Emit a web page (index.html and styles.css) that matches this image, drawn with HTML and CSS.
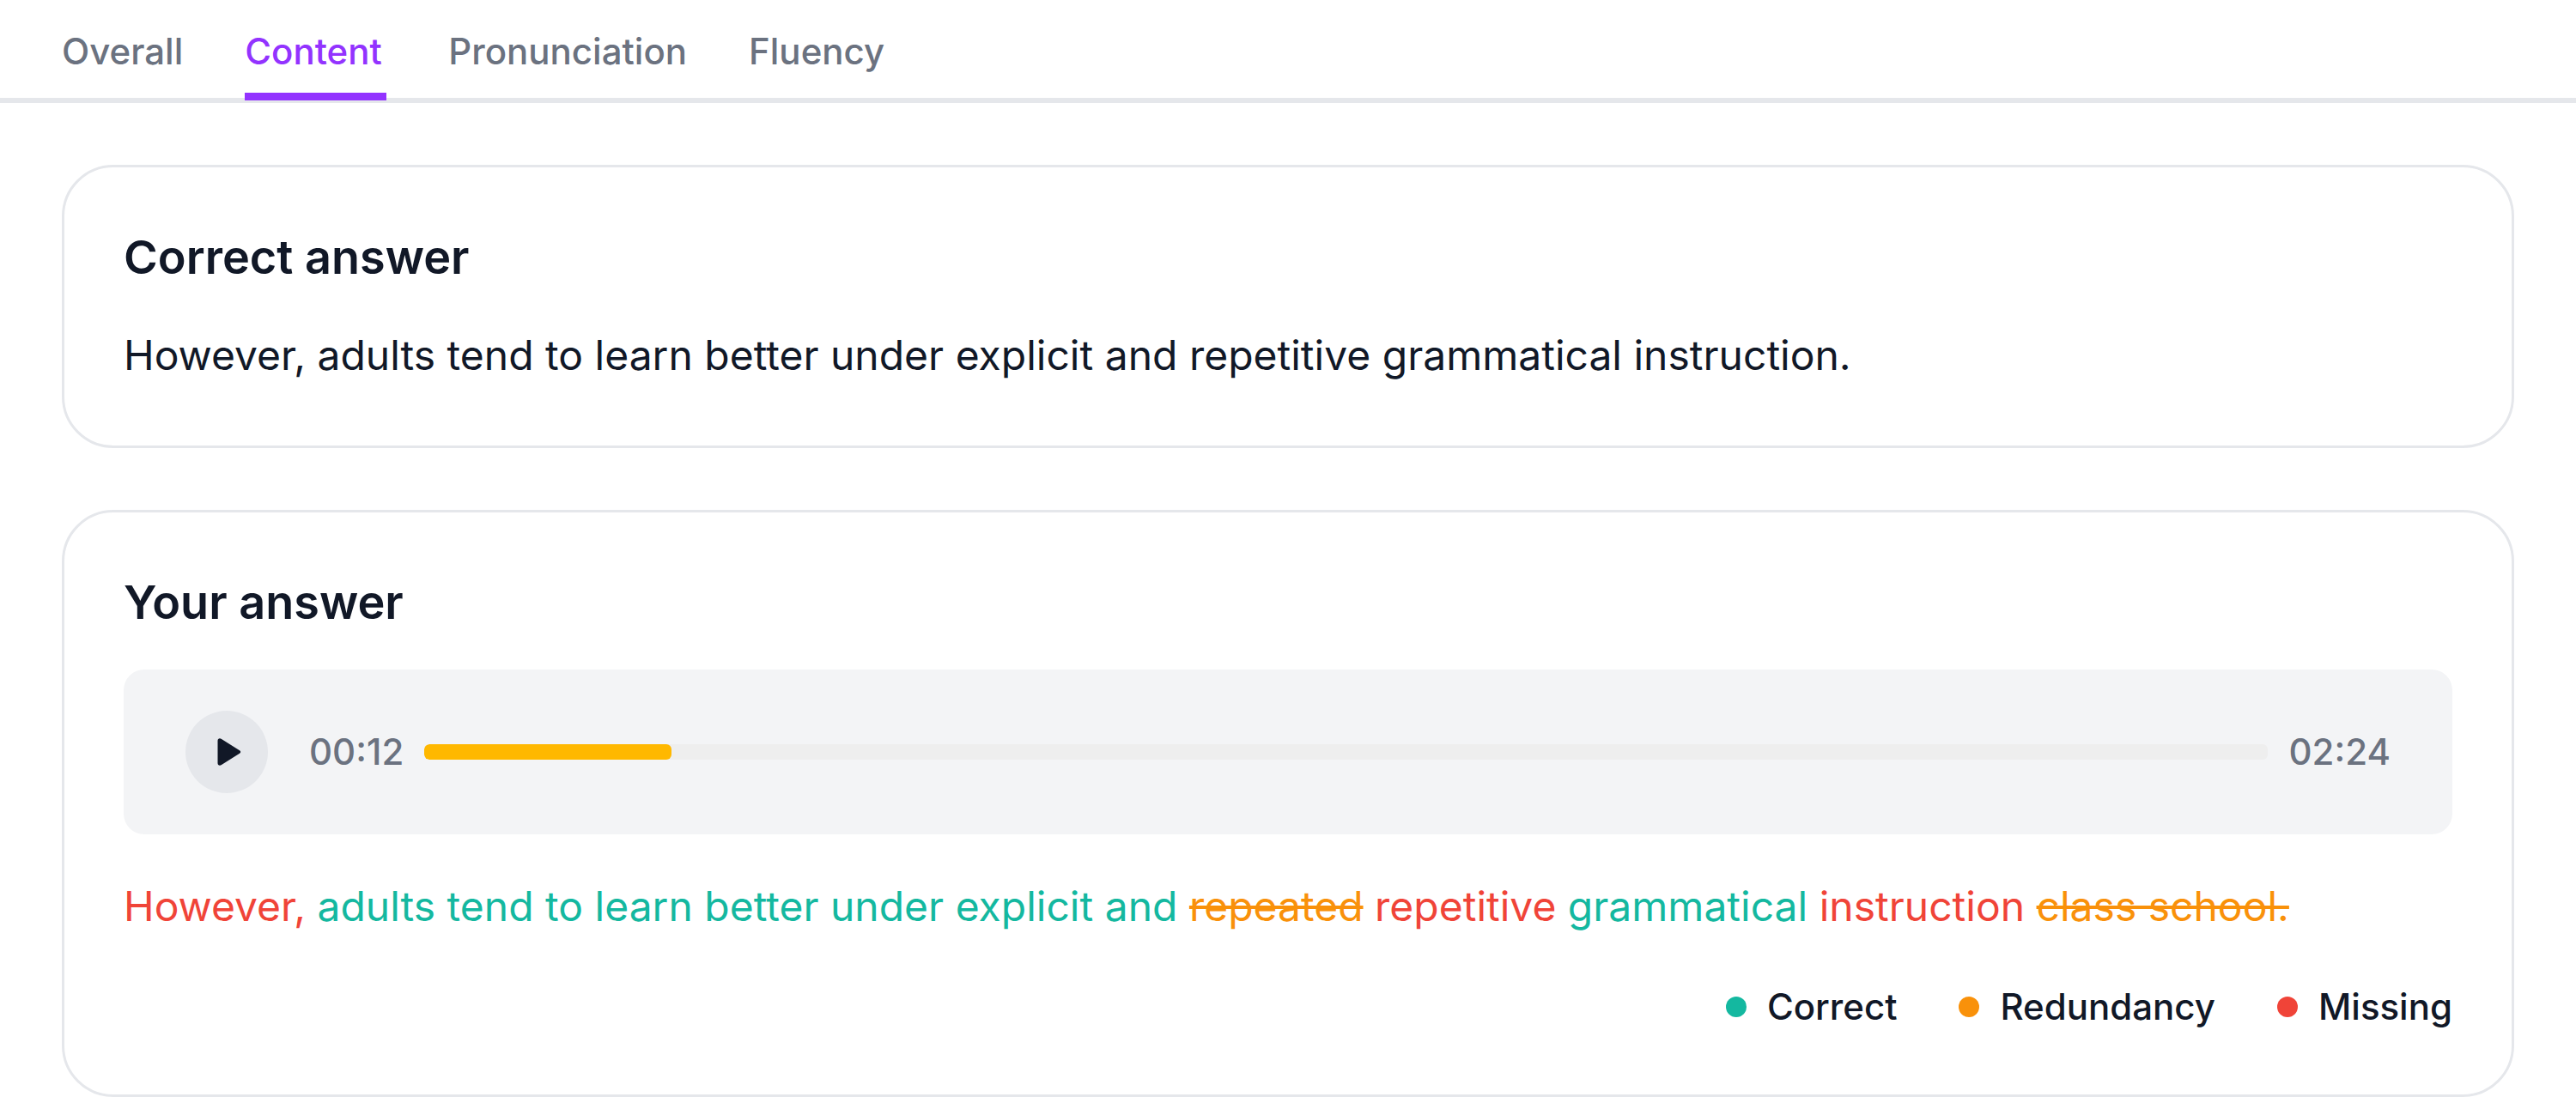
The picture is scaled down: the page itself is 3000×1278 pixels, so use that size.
FILE: index.html
```html
<!DOCTYPE html>
<html lang="en">
<head>
  <meta charset="utf-8">
  <meta name="viewport" content="width=device-width, initial-scale=1">
  <title>Answer review</title>
  <link rel="stylesheet" href="styles.css">
</head>
<body>
  <nav class="tabs" aria-label="Result sections">
    <a class="tab" href="#overall">Overall</a>
    <a class="tab tab-active" href="#content" aria-current="page">Content</a>
    <a class="tab" href="#pronunciation">Pronunciation</a>
    <a class="tab" href="#fluency">Fluency</a>
  </nav>

  <main class="content" id="content">
    <section class="card">
      <h2 class="card-title">Correct answer</h2>
      <p class="answer">However, adults tend to learn better under explicit and repetitive grammatical instruction.</p>
    </section>

    <section class="card">
      <h2 class="card-title">Your answer</h2>
      <div class="player">
        <button class="play" type="button" aria-label="Play">
          <svg class="play-icon" viewBox="0 0 28 32" aria-hidden="true">
            <path d="M0.500 3C0.500 0.500 2.800 -0.500 5 0.900L26 14.200C27.600 15.200 27.600 16.800 26 17.800L5 31.100C2.800 32.500 0.500 31.500 0.500 29Z"/>
          </svg>
        </button>
        <div class="timeline">
          <span class="time">00:12</span>
          <progress class="bar" max="1000" value="134" aria-label="Playback position"></progress>
          <span class="time">02:24</span>
        </div>
      </div>
      <p class="answer answer-given"><span class="missing">However,</span> <span class="correct">adults tend to learn better under explicit and</span> <del class="redundant">repeated</del> <span class="missing">repetitive</span> <span class="correct">grammatical</span> <span class="missing">instruction</span> <del class="redundant">class school.</del></p>
      <ul class="legend">
        <li class="legend-item"><span class="dot correct"></span>Correct</li>
        <li class="legend-item"><span class="dot redundant"></span>Redundancy</li>
        <li class="legend-item"><span class="dot missing"></span>Missing</li>
      </ul>
    </section>
  </main>
</body>
</html>
```
FILE: styles.css
```css
* {
  box-sizing: border-box;
}

body {
  margin: 0;
  background: #fff;
  color: #111827;
  font-family: Inter, "Liberation Sans", sans-serif;
  font-optical-sizing: none;
}

.tabs {
  display: flex;
  gap: 72px;
  padding: 27px 72px 0;
  border-bottom: 6px solid #e5e7eb;
}

.tab {
  margin-bottom: -3px;
  padding-bottom: 15px;
  border-bottom: 9px solid transparent;
  color: #6b7280;
  font-size: 42px;
  font-weight: 500;
  line-height: 66px;
  text-decoration: none;
}

.tab-active {
  min-width: 165px;
  border-color: #9333ff;
  color: #9333ff;
}

.content {
  display: grid;
  gap: 72px;
  padding: 72px 72px 0;
}

.card {
  padding: 69px;
  border: 3px solid #e5e7eb;
  border-radius: 60px;
}

.card-title {
  margin: 0 0 42px;
  font-size: 54px;
  font-weight: 600;
  line-height: 72px;
}

.answer {
  margin: 0;
  font-size: 48px;
  line-height: 72px;
}

.player {
  display: flex;
  align-items: center;
  gap: 48px;
  padding: 48px 72px;
  border-radius: 24px;
  background: #f3f4f6;
}

.play {
  display: grid;
  place-items: center;
  width: 96px;
  height: 96px;
  padding: 0;
  border: 0;
  border-radius: 50%;
  background: #e5e7eb;
}

.play-icon {
  width: 28px;
  height: 32px;
  margin-left: 6px;
  fill: #111827;
}

.timeline {
  display: flex;
  flex: 1;
  align-items: center;
  gap: 24px;
}

.time {
  color: #6b7280;
  font-size: 42px;
  font-weight: 500;
  line-height: 66px;
}

.bar {
  flex: 1;
  height: 18px;
  border: 0;
  border-radius: 6px;
  overflow: hidden;
  background: #eee;
  appearance: none;
}

.bar::-webkit-progress-bar {
  background: #eee;
}

.bar::-webkit-progress-value {
  border-radius: 6px;
  background: #ffb800;
}

.bar::-moz-progress-bar {
  border-radius: 6px;
  background: #ffb800;
}

.answer-given {
  margin: 48px 0;
}

.correct {
  color: #14b8a0;
}

.redundant {
  color: #f9910a;
  text-decoration-thickness: 4px;
}

.missing {
  color: #f04438;
}

.legend {
  display: flex;
  flex-wrap: wrap;
  justify-content: flex-end;
  gap: 72px;
  margin: 0;
  padding: 0;
  list-style: none;
  font-size: 42px;
  font-weight: 500;
  line-height: 66px;
}

.legend-item {
  display: flex;
  align-items: center;
  gap: 24px;
}

.dot {
  width: 24px;
  height: 24px;
  border-radius: 50%;
  background: currentColor;
}
```
